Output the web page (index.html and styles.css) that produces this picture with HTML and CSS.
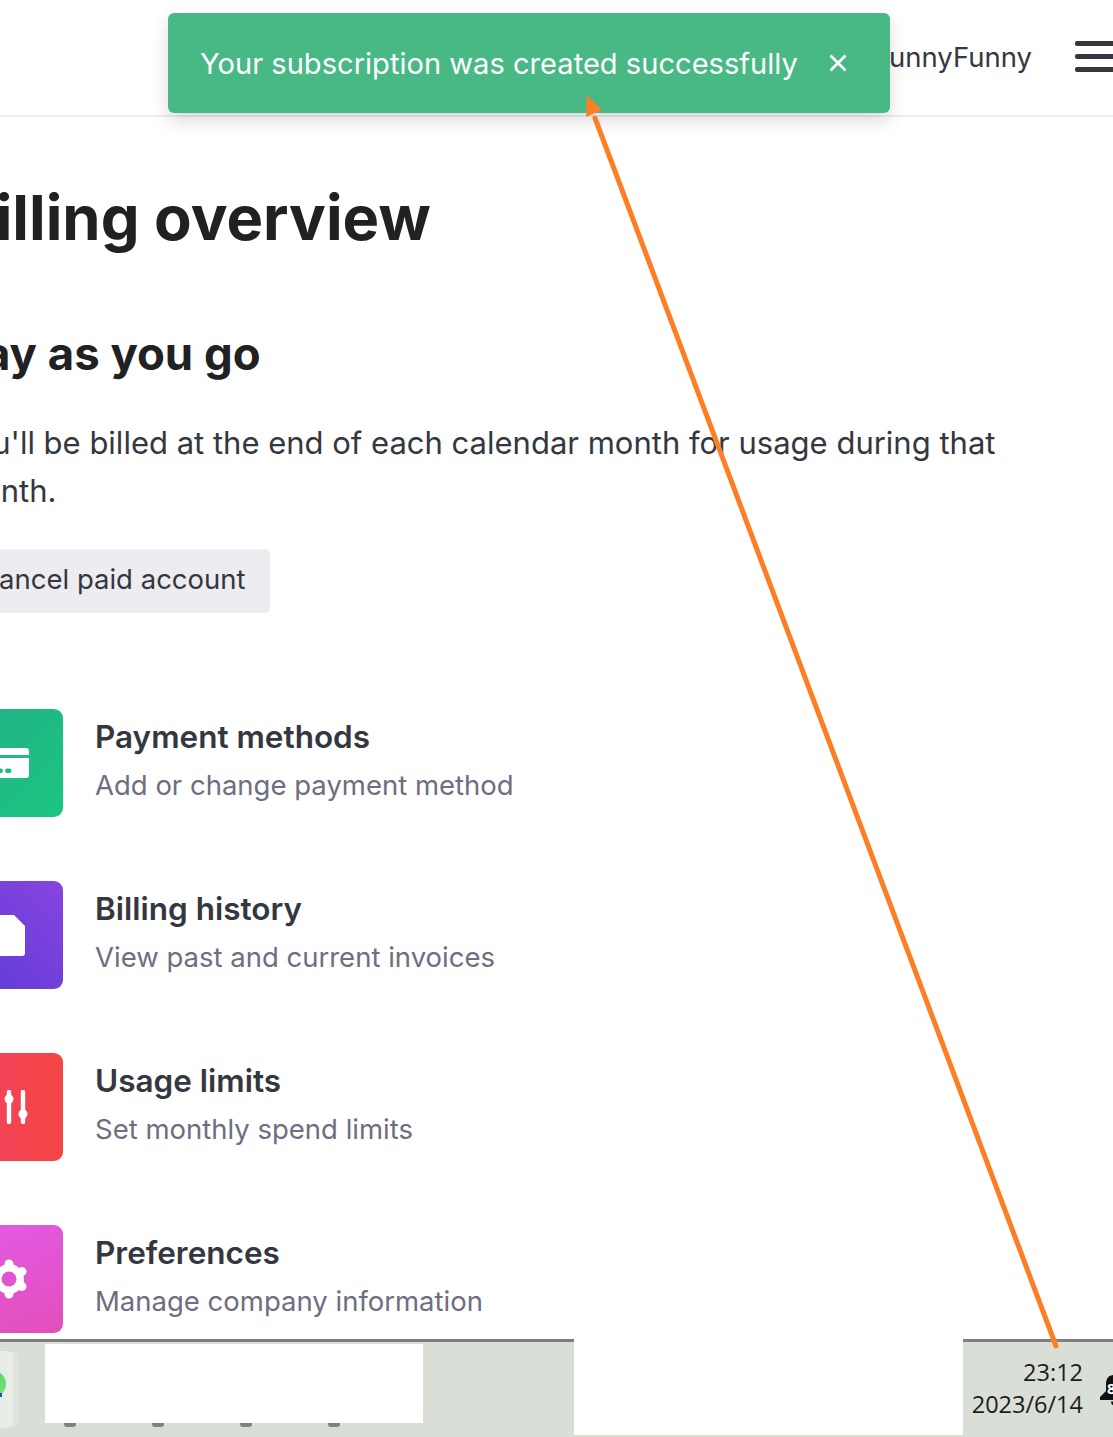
FILE: index.html
```html
<!DOCTYPE html>
<html lang="en">
<head>
    <meta charset="UTF-8">
    <title>Billing overview</title>
    <link rel="stylesheet" href="styles.css">
</head>
<body>
    <div class="page">
        <header class="topbar">
            <span class="user-name">FunnyFunny</span>
            <div class="burger"><span></span><span></span><span></span></div>
        </header>

        <div class="toast">
            <span class="toast-text">Your subscription was created successfully</span>
            <svg class="toast-close" viewBox="0 0 18 18" width="18" height="18">
                <path d="M1.500 1.500 16.500 16.500M16.500 1.500 1.500 16.500" stroke="#fff" stroke-width="2.800" fill="none"/>
            </svg>
        </div>

        <main class="content">
            <h1 class="title">Billing overview</h1>
            <h2 class="subtitle">Pay as you go</h2>
            <p class="lead">You'll be billed at the end of each calendar month for usage during that month.</p>
            <button class="cancel-btn">Cancel paid account</button>

            <div class="links">
                <div class="link-row">
                    <div class="link-icon green">
                        <svg viewBox="0 0 40 30" width="40" height="30">
                            <path d="M3 0H37a3 3 0 0 1 3 3V7H0V3a3 3 0 0 1 3-3ZM0 10H40V27a3 3 0 0 1-3 3H3a3 3 0 0 1-3-3Z" fill="#fff"/>
                            <rect x="7" y="20.500" width="7" height="4.500" rx="2.200" fill="#1dbb84"/>
                            <rect x="16" y="20.500" width="6.500" height="4.500" rx="2.200" fill="#1dbb84"/>
                        </svg>
                    </div>
                    <div class="link-text">
                        <div class="link-title">Payment methods</div>
                        <div class="link-desc">Add or change payment method</div>
                    </div>
                </div>
                <div class="link-row">
                    <div class="link-icon purple">
                        <svg viewBox="0 0 32 41" width="32" height="41">
                            <path d="M3 0H21L32 11V38a3 3 0 0 1-3 3H3a3 3 0 0 1-3-3V3a3 3 0 0 1 3-3Z" fill="#fff"/>
                        </svg>
                    </div>
                    <div class="link-text">
                        <div class="link-title">Billing history</div>
                        <div class="link-desc">View past and current invoices</div>
                    </div>
                </div>
                <div class="link-row">
                    <div class="link-icon red">
                        <svg viewBox="0 0 42 34" width="42" height="34">
                            <path d="M7 2V32M21 2V32M35 2V32" stroke="#fff" stroke-width="4.400" stroke-linecap="round"/>
                            <circle cx="7" cy="24" r="4.500" fill="#fff"/>
                            <circle cx="21" cy="9" r="4.500" fill="#fff"/>
                            <circle cx="35" cy="24" r="4.500" fill="#fff"/>
                        </svg>
                    </div>
                    <div class="link-text">
                        <div class="link-title">Usage limits</div>
                        <div class="link-desc">Set monthly spend limits</div>
                    </div>
                </div>
                <div class="link-row">
                    <div class="link-icon pink">
                        <svg viewBox="0 0 40 40" width="40" height="40">
                            <circle cx="20" cy="20" r="15" fill="#fff"/>
                            <path d="M20 5V35M7 12.500 33 27.500M33 12.500 7 27.500" stroke="#fff" stroke-width="9" stroke-linecap="round"/>
                            <circle cx="20" cy="20" r="7.500" fill="#e054cf"/>
                        </svg>
                    </div>
                    <div class="link-text">
                        <div class="link-title">Preferences</div>
                        <div class="link-desc">Manage company information</div>
                    </div>
                </div>
            </div>
        </main>

        <footer class="taskbar">
            <div class="app-tile">
                <span class="app-dot"></span>
                <span class="app-mark"></span>
            </div>
            <div class="pins"><i></i><i></i><i></i><i></i></div>
            <div class="redact redact-apps"></div>
            <div class="redact redact-tray"></div>
            <div class="clock">
                <div>23:12</div>
                <div>2023/6/14</div>
            </div>
            <svg class="bell" viewBox="0 0 32 32" width="32" height="32">
                <path d="M16 1C9 1 7 5 7 11V17L1 23V26H31V23L25 17V11C25 5 23 1 16 1ZM12 27.500a4 4 0 0 0 8 0Z" fill="#111"/>
                <text x="8" y="20" class="bell-count">8</text>
            </svg>
        </footer>

        <svg class="arrow" viewBox="0 0 1113 1437" width="1113" height="1437">
            <path d="M1056 1346 595 118" stroke="#fd7e24" stroke-width="5" stroke-linecap="round" fill="none"/>
            <path d="M587 95 602 110 586 117Z" fill="#fd7e24"/>
        </svg>
    </div>
</body>
</html>
```

FILE: styles.css
```css
* {
    box-sizing: border-box;
    margin: 0;
    padding: 0;
}

body {
    font-family: 'Inter', sans-serif;
    background-color: #ffffff;
    color: #202123;
}

.page {
    position: relative;
    width: 1113px;
    height: 1437px;
    overflow: hidden;
    display: flex;
    flex-direction: column;
}

.topbar {
    height: 117px;
    flex-shrink: 0;
    border-bottom: 2px solid #ececf1;
    display: flex;
    justify-content: flex-end;
    align-items: center;
    gap: 43px;
    margin-right: -40px;
    padding-bottom: 2px;
}

.user-name {
    font-size: 27.500px;
    color: #353740;
}

.burger {
    width: 78px;
    display: flex;
    flex-direction: column;
    gap: 8px;
}

.burger span {
    display: block;
    height: 5px;
    background-color: #353740;
    border-radius: 2px;
}

.toast {
    position: absolute;
    left: 168px;
    top: 13px;
    width: 722px;
    height: 100px;
    background-color: #48b985;
    border-radius: 6px;
    box-shadow: 0 8px 18px rgba(0, 0, 0, 0.14);
    display: flex;
    align-items: center;
    gap: 31px;
    padding: 0 0 0 32px;
    color: #ffffff;
}

.toast-text {
    font-size: 29.100px;
}

.content {
    flex: 1;
    margin-left: -45px;
    width: 1060px;
}

.title {
    font-size: 61.500px;
    font-weight: 700;
    line-height: 72px;
    margin-top: 65px;
    color: #202123;
}

.subtitle {
    font-size: 45.500px;
    font-weight: 700;
    line-height: 52px;
    margin-top: 74px;
}

.lead {
    font-size: 31px;
    line-height: 48px;
    margin-top: 39px;
    color: #353740;
}

.cancel-btn {
    display: block;
    font-family: inherit;
    font-size: 27.500px;
    color: #353740;
    background-color: #ececf1;
    border: none;
    border-radius: 5px;
    height: 64px;
    padding: 0 24px 4px;
    margin-top: 34px;
}

.links {
    margin-top: 96px;
    display: flex;
    flex-direction: column;
    gap: 64px;
}

.link-row {
    display: flex;
    align-items: center;
    gap: 32px;
}

.link-icon {
    width: 108px;
    height: 108px;
    flex-shrink: 0;
    border-radius: 9px;
    display: flex;
    align-items: center;
    justify-content: center;
}

.green { background: linear-gradient(135deg, #22b088, #1cc57f); }
.purple { background: linear-gradient(45deg, #5d3bd6, #8744e0); }
.red { background: linear-gradient(90deg, #ef4464, #f54444); }
.pink { background: linear-gradient(160deg, #e25ae8, #e34fb8); }

.link-text {
    padding-bottom: 4px;
}

.link-title {
    font-size: 31.500px;
    font-weight: 600;
    line-height: 38px;
    color: #353740;
}

.link-desc {
    font-size: 27.500px;
    line-height: 38px;
    margin-top: 10px;
    color: #6e6e80;
}

.taskbar {
    position: relative;
    height: 98px;
    flex-shrink: 0;
    background-color: #d9ded6;
    border-top: 3px solid #7f807d;
}

.app-tile {
    position: absolute;
    left: -30px;
    top: 9px;
    width: 43px;
    height: 77px;
    background-color: #e9ede8;
    border-radius: 6px;
    box-shadow: 7px 0 0 -1px #dfe4dc;
}

.app-dot {
    position: absolute;
    right: 7px;
    top: 19px;
    width: 30px;
    height: 28px;
    border-radius: 50%;
    background: linear-gradient(135deg, #3fd34f, #7fe07f);
}

.app-mark {
    position: absolute;
    left: 29px;
    top: 42px;
    width: 3px;
    height: 4px;
    background-color: #1f4f9e;
}

.pins {
    position: absolute;
    left: 64px;
    top: 78px;
    display: flex;
    gap: 76px;
}

.pins i {
    display: block;
    width: 12px;
    height: 7px;
    border-radius: 0 0 3px 3px;
    background-color: #7e827b;
}

.redact {
    position: absolute;
    background-color: #ffffff;
}

.redact-apps {
    left: 45px;
    top: 2px;
    width: 378px;
    height: 79px;
}

.redact-tray {
    left: 574px;
    top: -3px;
    width: 389px;
    height: 96px;
}

.clock {
    position: absolute;
    right: 30px;
    top: 14px;
    text-align: right;
    font-family: 'Open Sans', sans-serif;
    font-size: 23.500px;
    line-height: 32px;
    color: #1c1c1c;
}

.bell {
    position: absolute;
    left: 1099px;
    top: 32px;
}

.bell-count {
    font-family: 'Open Sans', sans-serif;
    font-size: 15px;
    font-weight: 700;
    fill: #ffffff;
}

.arrow {
    position: absolute;
    left: 0;
    top: 0;
    pointer-events: none;
}
```
